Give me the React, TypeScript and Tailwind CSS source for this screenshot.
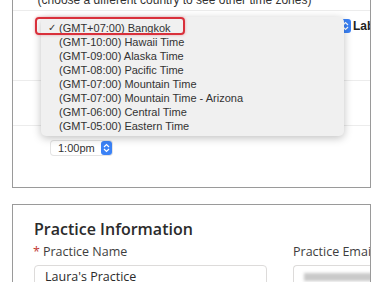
const zones = [
  '(GMT+07:00) Bangkok',
  '(GMT-10:00) Hawaii Time',
  '(GMT-09:00) Alaska Time',
  '(GMT-08:00) Pacific Time',
  '(GMT-07:00) Mountain Time',
  '(GMT-07:00) Mountain Time - Arizona',
  '(GMT-06:00) Central Time',
  '(GMT-05:00) Eastern Time',
];

function Stepper() {
  return (
    <span className="w-[11px] h-[14px] rounded-[3px] bg-[#3b82f6] flex items-center justify-center">
      <svg width="7" height="10" viewBox="0 0 7 10" fill="none" stroke="white" strokeWidth="1.2">
        <path d="M1 4 L3.5 1.5 L6 4" />
        <path d="M1 6 L3.5 8.5 L6 6" />
      </svg>
    </span>
  );
}

export default function App() {
  return (
    <div className="relative w-[380px] h-[282px] overflow-hidden bg-white text-[#333]" style={{ fontFamily: '"Liberation Sans", Arial, sans-serif' }}>
      {/* settings card, top cut off */}
      <div className="ml-[12px] w-[359px] h-[188px] border border-t-0 border-[#9a9a9a] flex flex-col">
        <div className="h-[11px] border-b border-[#ececec] flex justify-center items-end overflow-hidden">
          <span className="text-[12px] leading-[14px] mb-[3px] pr-[34px] whitespace-nowrap">(choose a different country to see other time zones)</span>
        </div>
        <div className="h-[70px] border-b border-[#ececec] flex justify-end items-start pt-[8px] gap-[2px]">
          <Stepper />
          <span className="text-[12px] leading-[14px] font-bold text-[#222] w-[17px] overflow-hidden whitespace-nowrap">Label</span>
        </div>
        <div className="h-[45px] border-b border-[#ececec]" />
        <div className="flex-1 pl-[38px] pt-[15px]">
          <div className="flex items-center w-[61px] h-[14px] rounded-[3px] bg-white shadow-[0_0_0_1px_#e4e4e4]">
            <span className="flex-1 text-[11px] leading-[14px] pl-[7px]">1:00pm</span>
            <Stepper />
          </div>
        </div>
      </div>

      {/* practice information card */}
      <div className="ml-[12px] mt-[16px] w-[359px] border border-b-0 border-[#9a9a9a] pl-[21px] pt-[14px] overflow-hidden" style={{ fontFamily: '"Open Sans", sans-serif' }}>
        <h2 className="text-[16px] leading-[20px] font-semibold text-[#2b2b2b]">Practice Information</h2>
        <div className="flex gap-[26px] mt-[5px]">
          <div className="w-[233px] shrink-0">
            <div className="text-[12.5px] leading-[16px] text-[#3e3e3e] -ml-[1px]">
              <span className="text-[#c23934] mr-[3px]">*</span>Practice Name
            </div>
            <div className="mt-[5px] h-[30px] border border-[#dddbda] rounded-[4px] px-[10px] pt-[3px] text-[12.5px] leading-[16px] text-[#2b2b2b]">Laura's Practice</div>
          </div>
          <div className="flex-1 overflow-hidden">
            <div className="text-[12.5px] leading-[16px] text-[#3e3e3e] whitespace-nowrap">Practice Email</div>
            <div className="mt-[5px] h-[30px] border border-r-0 border-[#dddbda] rounded-l-[4px] pl-[10px] pt-[7px]">
              <div className="h-[8px] w-[80px] bg-[#c9c9c9] blur-[1.5px]" />
            </div>
          </div>
        </div>
      </div>

      {/* open time zone menu */}
      <div className="absolute left-[41px] top-[17px] w-[303px] h-[119px] bg-[#f0f0f0] rounded-[5px] shadow-[0_2px_8px_rgba(0,0,0,0.25)] pt-[4px] text-[11px] leading-[14px] text-[#333]">
        {zones.map((z, i) => (
          <div key={z} className="flex items-center h-[14px]">
            <span className="w-[18px] pl-[7px] text-[10px]">{i === 0 ? '✓' : ''}</span>
            <span>{z}</span>
          </div>
        ))}
      </div>
      <div className="absolute left-[35px] top-[17px] w-[150px] h-[18px] border-2 border-[#d9303b] rounded-[4px] shadow-[0_0_3px_rgba(217,48,59,0.4)]" />
    </div>
  );
}
